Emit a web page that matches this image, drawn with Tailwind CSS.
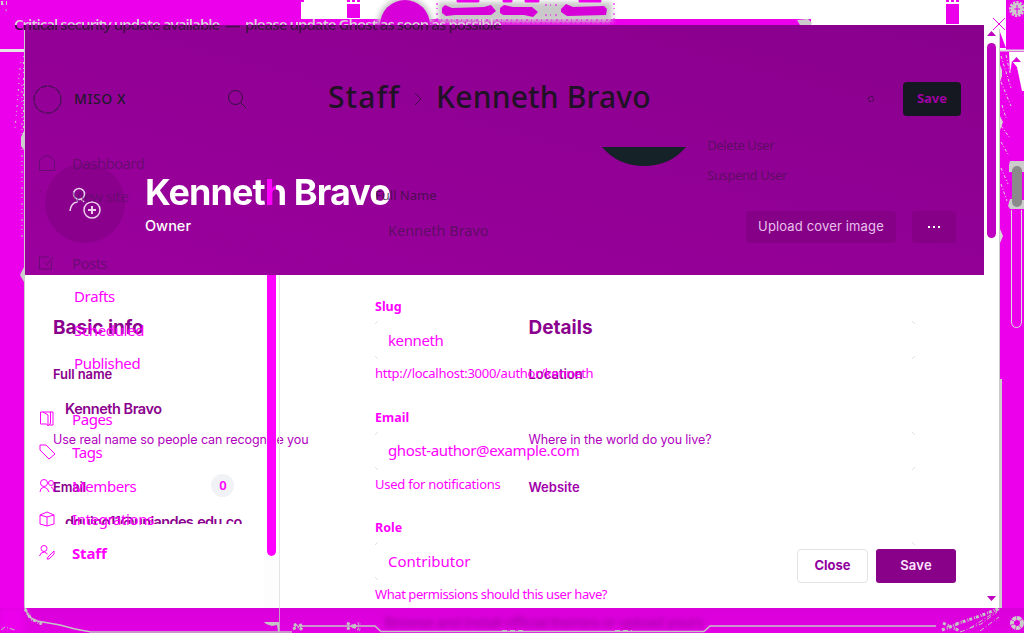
<!DOCTYPE html>
<html lang="en"><head><meta charset="utf-8"><title>Staff › Kenneth Bravo</title>
<script src="https://cdn.jsdelivr.net/npm/@tailwindcss/browser@4"></script></head>
<body class="relative h-[633px] w-[1024px] overflow-hidden bg-[#ec00ec] font-['Noto_Sans',sans-serif]">
<!-- backdrop artwork -->
<svg class="absolute inset-0" width="1024" height="633" viewBox="0 0 1024 633" fill="none">
<defs><linearGradient id="b" x1="0" x2="0" y1="0" y2="1"><stop stop-color="#d900d9"/><stop offset="1" stop-color="#e200e2"/></linearGradient>
<filter id="f" x="-20%" y="-100%" width="140%" height="300%"><feGaussianBlur stdDeviation="2.5"/></filter></defs>
<path fill="#fff" d="M301 0H1006V50H301z"/>
<path fill="#ec00ec" d="M301 19H811V25H301zM347 4H360V18H347zM946 4H959V24H946z"/>
<path stroke="#ec00ec" stroke-width="2" stroke-dasharray="3 2" d="M347 1H360M946 1H959M296 1H304"/>
<path fill="#c9c9c9" filter="url(#f)" d="M377 25A28 28 0 0 1 433 25zM438 2H612V22H438z"/>
<circle cx="405" cy="25" r="25" fill="#d800d8"/>
<path fill="#d800d8" d="M442 8L445 5 452 8 484 7 491 5 496 11 491 15 455 15 446 16 442 13zM500 8L504 5 513 7 532 7 538 12 533 17 524 15 503 15 500 13zM561 9L566 4 573 7 604 6 607 9 606 15 567 16 561 12z"/>
<path stroke="#ec00ec" stroke-width="3" stroke-linecap="round" d="M458 1H478M504 1H511M526 1H538M580 1H600"/>
<path stroke="#ec00ec" stroke-width="1" stroke-dasharray="2 3 1 4" d="M437 3V19M614 3V19M436 20H614M430 23H612M545 5H560M545 15H560"/>
<path fill="#ccc" d="M797 20L808 19 812 23 811 25H800z"/>
<path stroke="#e4e4e4" stroke-width="3" d="M0 50.500H24"/>
<path stroke="#ccc" stroke-width="1" stroke-dasharray="1 5 2 4 1 3" d="M23.500 56V140M21 62L18 84M3 4L7 12M19 83L15 130M22 85V240"/>
<path stroke="#ccc" stroke-width="4" stroke-dasharray="2 3 1 2" d="M1 3H8"/>
<path fill="#ccc" d="M24 131L21 137 21 146 24 150zM24 267L20 275 24 282z"/>
<path stroke="#ccc" stroke-width="1" d="M24.500 25V608"/>
<rect y="608" width="1024" height="25" fill="url(#b)"/>
<rect y="608" width="24" height="25" fill="#ec00ec" filter="url(#f)"/>
<text x="384" y="628" fill="#b000b0" font-family="Inter" font-size="15" font-weight="600" textLength="320" filter="url(#f)">Browse and install official themes or upload yours</text>
<path stroke="#c4c4c4" stroke-width="1.500" d="M25 608L29 617 37 621 60 625 75 629 91 632H292M301 626H375L381 631.500H704L710 626H936"/>
<path stroke="#c4c4c4" stroke-width="3" stroke-dasharray="3 2 1 1" d="M25 609L31 619 42 624M293 629L303 624M294 624L303 630M347 623L360 630M347 629L360 623M943 623L960 631M942 630L960 623M956 624L980 616 1000 608"/>
<path fill="#c4c4c4" d="M264 622H280V632H278L277 625 272 626 266 624z"/>
<path stroke="#c4c4c4" stroke-dasharray="5 2 1 2" d="M960 632L981 624 997 612M980 631L999 617M970 628L1000 609M1 630L5 627 15 630"/>
<path stroke="#c4c4c4" stroke-width="2" stroke-dasharray="5 3" d="M502 631H525M615 631H632"/>
<circle cx="1017" cy="623" r="5" stroke="#ccc" stroke-width="4" stroke-dasharray="4 .6"/>
<path fill="#fff" d="M998 29V50H1001V29zM1001 52H1024V91H1022L1017 67 1012 61 1010 73 1009 52z"/>
<path fill="#ec00ec" d="M1000 32L1006 48H1000z"/>
<path stroke="#ddd" stroke-width="2" d="M984 50.500H1024"/>
<path fill="#d800d8" d="M1012 62H1021L1016.500 57z"/>
<path stroke="#ddd" stroke-width="1" stroke-dasharray="3 2 1 2" d="M1001 56L1011 88M1001 82L1011 106M1006 55L1010 73M1001 126L1010 138M1002 105L1006 118M1001 142L1009 156M1001 168L1008 184M1001 184L1007 201"/>
<path fill="#d8d8d8" d="M1000 65L1002 70 1002 76 1000 82zM1000 116L1003 122 1000 130zM1000 229L1003 236 1000 243z"/>
<path fill="#ccc" d="M1010 161H1024V172H1022V200H1024V209H1010L1008 206 1010 199H1012V172H1009V165z"/><rect x="1012" y="166" width="10" height="41" rx="5" fill="#8a8a8a"/>
<path stroke="#ddd" d="M1011.500 210V322Q1012 327.500 1016.500 327.500T1021.500 322V210"/>
<path stroke="#ccc" d="M999.500 29V608"/><path stroke="#ccc" stroke-width="3" d="M1000.500 379V608"/>
<circle cx="1017" cy="9" r="6" fill="#ccc" stroke="#ccc" stroke-width="4" stroke-dasharray="2 1"/><path stroke="#ec00ec" d="M1017 5V14M1014 9H1020"/>
</svg>

<!-- user settings dialog -->
<section class="absolute top-[25px] left-[25px] flex h-[583px] w-[974px] flex-col bg-white font-['Inter',sans-serif]">
<header class="flex h-[250px] w-[959px] shrink-0 items-end bg-linear-to-tr from-[#9b009d] to-[#89008d] pb-8 pl-5 pr-7">
<div class="flex size-20 items-center justify-center rounded-full bg-[#8a008d]"><svg width="34" height="34" viewBox="0 0 34 34" fill="none" stroke="#eed0ee" stroke-width="1.500"><circle cx="11" cy="8" r="5.500"/><path d="M9 13v3q-6 1-7 9M13 13l3 3"/><circle cx="24" cy="24" r="8"/><path stroke-width="2" d="M24 20v8M20 24h8"/></svg></div>
<div class="ml-5 flex-1 pb-[7px]"><h1 class="bg-[linear-gradient(90deg,white_122px,magenta_122px,magenta_131px,white_131px)] bg-clip-text text-4xl leading-[44px] font-bold whitespace-nowrap text-transparent"><span class="tracking-[-0.95px]">Kenneth Bravo</span></h1><p class="mt-0.5 text-[14.500px] leading-5 font-medium text-white">Owner</p></div>
<button class="h-8 w-[150px] rounded bg-[#850087] text-[13px] tracking-[.15px] text-[#eac0ec]">Upload cover image</button>
<button class="ml-4 flex h-8 w-11 items-center justify-center gap-[3px] rounded bg-[#850087]"><i class="size-0.5 bg-white"></i><i class="size-0.5 bg-white"></i><i class="size-0.5 bg-white"></i></button>
</header>
<div class="flex h-[249px] overflow-hidden pl-7 text-[#8b008d]">
<div class="w-[475.500px] pt-[41px] whitespace-nowrap"><h2 class="text-[19px] leading-6 font-bold tracking-[-.02px]">Basic info</h2>
<p class="mt-[24px] text-[13px] leading-5 font-semibold tracking-[-.1px]">Full name</p><p class="mt-[15px] pl-3 text-[14.500px] leading-5 font-semibold tracking-[-.45px]">Kenneth Bravo</p><p class="mt-[11px] text-[12.500px] leading-5 tracking-[-.08px] text-[#b000bd]">Use real name so people can recognize you</p><p class="mt-[27px] text-[13px] leading-5 font-semibold tracking-[-.2px]">Email</p><p class="mt-[15px] pl-3 text-[14.500px] leading-5 font-semibold tracking-[-.64px]">dquino11@uniandes.edu.co</p></div>
<div class="pt-[41px]"><h2 class="text-[19px] leading-6 font-bold">Details</h2><p class="mt-[24px] text-[13px] leading-5 font-semibold">Location</p><p class="mt-[46px] text-[12.500px] leading-5 tracking-[-.08px] text-[#b000bd]">Where in the world do you live?</p><p class="mt-[27px] text-[13px] leading-5 font-semibold text-[#a200aa]">Website</p></div>
</div>
<footer class="mt-[25px] flex justify-end gap-2 pr-[43px]"><button class="h-[34px] w-[71px] rounded border border-[#e3e3e3] text-[13px] font-bold text-[#9200a0]">Close</button><button class="h-[34px] w-20 rounded-[3px] bg-[#890089] text-[13px] font-semibold tracking-[.2px] text-[#ffe5ff]">Save</button></footer>
</section>

<!-- staff page showing through the dialog -->
<div class="absolute inset-0 flex flex-col text-[#ff00ff]">
<p class="absolute top-[14px] left-[14px] bg-[linear-gradient(#d8d8d8_11px,#46104d_11px)] bg-clip-text text-[15px] leading-5 font-semibold whitespace-nowrap text-transparent"><span class="inline-block tracking-[-.98px]">Critical security update available&nbsp; —&nbsp; please update Ghost as soon as possible</span></p>
<div class="flex flex-1">
<nav class="w-[280px] pt-[82px] text-[15px] [&_li]:flex [&_li]:h-[33.500px] [&_li]:items-center [&_svg]:mr-[17px]">
<div class="flex h-[34px] items-center pl-[33px] text-[#23182d]"><svg width="29" height="29" fill="none" stroke="#4c105a" stroke-width="1.300" stroke-dasharray="7 1"><circle cx="14.500" cy="14.500" r="13.500"/></svg><b class="-ml-[5px] -mt-0.5 text-[14px] font-medium tracking-[.6px]">MISO X</b><svg class="ml-auto" width="20" height="20" viewBox="0 0 20 20" fill="none" stroke="#35113f"><circle cx="8.500" cy="8.500" r="7"/><path d="M13 13l6 6"/></svg><span class="w-[16px]"></span></div>
<ul class="mt-[30px] pl-[39px] tracking-[-.6px] text-[#571063]/70">
<li><svg width="16" height="16" fill="none" stroke="currentColor"><path d="M.5 15.500V6Q8-5 15.500 6v9.500z"/></svg>Dashboard</li>
<li><svg width="16" height="16" fill="none" stroke="currentColor"><path d="M1 3h1"/></svg><span class="text-[#571063]/60">View site</span></li>
<li class="mt-[33px]"><svg width="16" height="16" fill="none" stroke="currentColor"><path d="M10 2H.5v12h12V6M5 7l3 3 6-8"/></svg>Posts</li></ul>
<ul class="pl-[74px] tracking-[-.35px]"><li>Drafts</li><li>Scheduled</li><li>Published</li></ul>
<ul class="mt-[22px] pl-[39px] tracking-[-.4px]">
<li><svg width="16" height="16" fill="none" stroke="currentColor"><path d="M1.500 1h10v11l-2 3-2-2h-6zM4 1l5 3v11M14 1v13h-3M11 1h3"/></svg>Pages</li>
<li><svg width="16" height="16" fill="none" stroke="currentColor"><path d="M1 1h6l9 9-6 5-9-9z"/></svg>Tags</li>
<li><svg width="16" height="16" fill="none" stroke="currentColor"><circle cx="5" cy="5" r="3.500"/><circle cx="12" cy="5" r="2.500"/><path d="M1 14q0-4 4-5 4 1 5 5M12 9q3 1 3 5"/></svg>Members<span class="ml-[75px] flex size-[23px] items-center justify-center rounded-full bg-[#f1f2f5] text-[13px] font-semibold">0</span></li>
<li><svg width="16" height="16" fill="none" stroke="currentColor"><path d="M8 1l7 3v9l-7 2-7-2V4zM1 4l7 2 7-2M8 6v9"/></svg>Integrations</li>
<li class="font-bold tracking-[-.15px]"><svg width="16" height="17" fill="none" stroke="currentColor"><circle cx="5" cy="4.500" r="3"/><path d="M.5 12q1-4 5-4l3 2M9 13l6-6v3l-5 5H8z"/></svg>Staff</li></ul>
</nav>
<main class="flex-1 pl-[95px] text-[13px]">
<div class="flex h-[147px] items-center pt-[50px] pr-[63px] text-[#211126]"><h2 class="-mt-[4px] -ml-[47px] flex items-center text-[30px] leading-10 font-medium whitespace-nowrap"><span class="tracking-[1.1px]">Staff</span><svg class="mx-[14px] mt-1" width="8" height="14" fill="none" stroke="#450950"><path d="M1 1l6 6-6 6"/></svg><span class="tracking-[.2px]">Kenneth Bravo</span></h2><i class="ml-auto mr-[29px] size-[6px] rounded-full border border-dashed border-[#31083c]"></i><button class="h-[34px] w-[58px] rounded bg-[#151820] font-bold text-[#a000a5]">Save</button></div>
<div class="flex h-[150px] justify-between text-[#38103e]/80"><div class="pt-[38px]"><p class="leading-5">Full Name</p><p class="mt-[15px] pl-[13px] text-[14.500px] leading-5 text-[#47144e]/70">Kenneth Bravo</p></div><div class="mr-[237px] flex"><svg width="84" height="20"><path fill="#152228" d="M0 0H84Q68 19 42 19T0 0"/></svg><div class="-mt-[12px] ml-[21px] tracking-[-.4px] text-[#531058]/80"><p class="leading-5 whitespace-nowrap">Delete User</p><p class="mt-[10px] leading-5 whitespace-nowrap">Suspend User</p></div></div></div>
<div class="w-[541px] [&_b]:block [&_b]:leading-5 [&_b]:text-[12.500px] [&_div]:mt-1 [&_div]:flex [&_div]:h-[38px] [&_div]:items-center [&_div]:pl-[13px] [&_div]:text-[15px] [&_p]:mt-[4px] [&_p]:leading-5 [&_section]:h-[110.500px]">
<section><b>Slug</b><div class="tracking-[-.4px]">kenneth</div><p class="tracking-[-.27px]">http://localhost:3000/author/kenneth</p></section>
<section><b>Email</b><div class="tracking-[-.38px]">ghost-author@example.com</div><p class="tracking-[-.25px]">Used for notifications</p></section>
<section><b>Role</b><div>Contributor</div><p class="tracking-[-.43px]">What permissions should this user have?</p></section></div>
</main></div></div>
<svg class="absolute inset-0" width="1024" height="633" fill="none">
<path fill="#888" fill-opacity=".02" d="M264 275H280V608H264z"/><path fill="#f0f" d="M267 275H276V551A4.500 5 0 0 1 267 551z"/><path stroke="#e4e4e4" d="M279.500 275V608"/><path stroke="#c4a0c4" d="M279.500 608V633"/>
<rect x="987" y="43" width="9" height="195" rx="4.500" fill="#c000c0"/><path fill="#c000c0" d="M987 36H996L991.500 31zM987 596H996L991.500 601z"/>
<path stroke="#ec00ec" d="M993 18L1005 30M1005 18L993 30"/>
<path stroke="#e0e0e0" d="M375 324l3-3M375 356l3 3M375 435l3-3M375 467l3 3M375 545l3-3M375 577l3 3M912 321l3 3M912 359l3-3M912 432l3 3M912 470l3-3M912 542l3 3"/>
</svg></body></html>
